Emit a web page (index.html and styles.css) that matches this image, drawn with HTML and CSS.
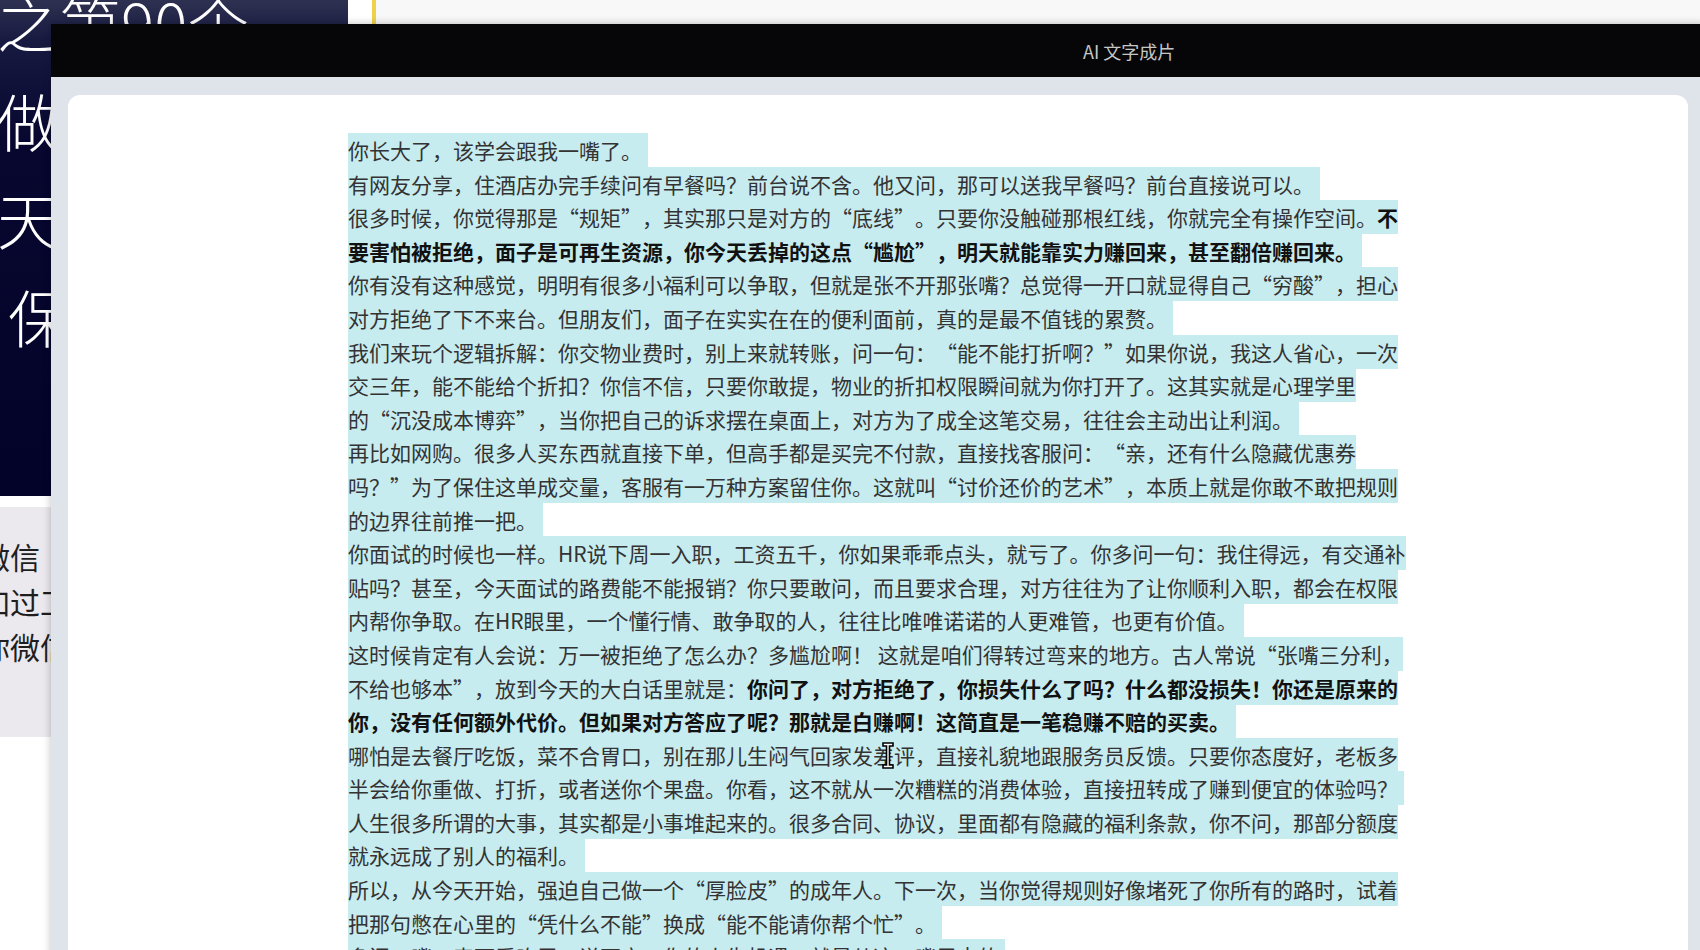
FILE: index.html
```html
<!DOCTYPE html>
<html lang="zh-CN">
<head>
<meta charset="utf-8">
<title>AI 文字成片</title>
<link rel="stylesheet" href="styles.css">
</head>
<body>
<div class="page">
  <aside class="left">
    <div class="poster">
      <div class="poster-text">
        <div>之第90个</div>
        <div>做</div>
        <div>天</div>
        <div class="ind">保</div>
      </div>
    </div>
    <div class="note">
      <div class="note-text">
        <p>微信</p>
        <p>加过工</p>
        <p>你微信</p>
      </div>
    </div>
  </aside>
  <div class="spacer"></div>
  <div class="rule"></div>
  <main class="workspace"></main>
</div>

<div class="modal">
  <header class="modal-head"><span class="modal-title">AI 文字成片</span></header>
  <div class="modal-body">
    <div class="card">
      <article class="doc">
        <p><span class="sel">你长大了，该学会跟我一嘴了。</span></p>
        <p><span class="sel">有网友分享，住酒店办完手续问有早餐吗？前台说不含。他又问，那可以送我早餐吗？前台直接说可以。</span></p>
        <p><span class="sel">很多时候，你觉得那是“规矩”，其实那只是对方的“底线”。只要你没触碰那根红线，你就完全有操作空间。<b>不要害怕被拒绝，面子是可再生资源，你今天丢掉的这点“尴尬”，明天就能靠实力赚回来，甚至翻倍赚回来。</b></span></p>
        <p><span class="sel">你有没有这种感觉，明明有很多小福利可以争取，但就是张不开那张嘴？总觉得一开口就显得自己“穷酸”，担心对方拒绝了下不来台。但朋友们，面子在实实在在的便利面前，真的是最不值钱的累赘。</span></p>
        <p><span class="sel">我们来玩个逻辑拆解：你交物业费时，别上来就转账，问一句：“能不能打折啊？”如果你说，我这人省心，一次交三年，能不能给个折扣？你信不信，只要你敢提，物业的折扣权限瞬间就为你打开了。这其实就是心理学里<span class="nb">的“</span>沉没成本博弈”，当你把自己的诉求摆在桌面上，对方为了成全这笔交易，往往会主动出让利润。</span></p>
        <p><span class="sel">再比如网购。很多人买东西就直接下单，但高手都是买完不付款，直接找客服问：“亲，还有什么隐藏优惠券吗？”为了保住这单成交量，客服有一万种方案留住你。这就叫“讨价还价的艺术”，本质上就是你敢不敢把规则的边界往前推一把。</span></p>
        <p><span class="sel">你面试的时候也一样。HR说下周一入职，工资五千，你如果乖乖点头，就亏了。你多问一句：我住得远，有交通补贴吗？甚至，今天面试的路费能不能报销？你只要敢问，而且要求合理，对方往往为了让你顺利入职，都会在权限内帮你争取。在HR眼里，一个懂行情、敢争取的人，往往比唯唯诺诺的人更难管，也更有价值。</span></p>
        <p><span class="sel">这时候肯定有人会说：万一被拒绝了怎么办？多尴尬啊！ 这就是咱们得转过弯来的地方。古人常说“张嘴三分利，不给也够本”，放到今天的大白话里就是：<b>你问了，对方拒绝了，你损失什么了吗？什么都没损失！你还是原来的你，没有任何额外代价。但如果对方答应了呢？那就是白赚啊！这简直是一笔稳赚不赔的买卖。</b></span></p>
        <p><span class="sel">哪怕是去餐厅吃饭，菜不合胃口，别在那儿生闷气回家发差评，直接礼貌地跟服务员反馈。只要你态度好，老板多半会给你重做、打折，或者送你个果盘。你看，这不就从一次糟糕的消费体验，直接扭转成了赚到便宜的体验吗？</span></p>
        <p><span class="sel">人生很多所谓的大事，其实都是小事堆起来的。很多合同、协议，里面都有隐藏的福利条款，你不问，那部分额度就永远成了别人的福利。</span></p>
        <p><span class="sel">所以，从今天开始，强迫自己做一个“厚脸皮”的成年人。下一次，当你觉得规则好像堵死了你所有的路时，试着把那句憋在心里的“凭什么不能”换成“能不能请你帮个忙”。</span></p>
        <p><span class="sel">多问一嘴，表面看吃亏，说不定，你的人生机遇，就是从这一嘴里来的</span></p>
      </article>
    </div>
  </div>
</div>

<svg class="cursor" width="12" height="27" viewBox="0 0 12 27" aria-hidden="true">
  <path d="M1 1H11V4H7.5V23H11V26H1V23H4.5V4H1Z" fill="#ffffff" stroke="#000000" stroke-width="1.6" stroke-linejoin="miter"/>
</svg>
</body>
</html>
```

FILE: styles.css
```css
html, body {
  margin: 0;
  padding: 0;
  width: 1700px;
  height: 950px;
  overflow: hidden;
  background: #ffffff;
  font-family: "Noto Sans CJK SC", "Noto Sans", sans-serif;
}

.page {
  display: flex;
  height: 950px;
}

.left {
  width: 348px;
  display: flex;
  flex-direction: column;
  flex-shrink: 0;
}

.poster {
  height: 496px;
  overflow: hidden;
  color: #ffffff;
  background: linear-gradient(180deg, #2e3150 0, #181a42 40px, #07072f 140px, #03032a 100%);
}

.poster-text {
  margin-top: -27px;
  margin-left: -3px;
  font-size: 62px;
  line-height: 98px;
  font-weight: 300;
  white-space: nowrap;
}

.poster-text .ind {
  padding-left: 11px;
}

.note {
  margin-top: 11px;
  height: 230px;
  background: #ebe8ee;
  overflow: hidden;
}

.note-text {
  margin-left: -20px;
  padding-top: 27px;
  font-size: 30px;
  line-height: 45px;
  color: #1e1e1e;
  white-space: nowrap;
}

.note-text p {
  margin: 0;
}

.spacer {
  width: 24px;
  flex-shrink: 0;
}

.rule {
  width: 4px;
  flex-shrink: 0;
  background: #efd24a;
}

.workspace {
  flex: 1;
  background: #f8f8f8;
}

.modal {
  position: absolute;
  left: 51px;
  top: 24px;
  width: 1654px;
  height: 940px;
  display: flex;
  flex-direction: column;
  box-shadow: 0 0 8px rgba(0, 0, 0, 0.25);
}

.modal-head {
  height: 53px;
  flex-shrink: 0;
  background: #060608;
  display: flex;
  align-items: center;
  padding-left: 1032px;
}

.modal-title {
  color: #c6c6c6;
  font-size: 18px;
}

.modal-body {
  flex: 1;
  background: #dfe4ea;
  padding: 18px 17px 0;
}

.card {
  height: 100%;
  background: #ffffff;
  border-radius: 12px 12px 0 0;
  padding-top: 39px;
  box-sizing: border-box;
}

.doc {
  width: 1060px;
  margin: 0 auto;
  font-size: 21px;
  line-height: 33.6px;
  color: #333333;
  text-spacing-trim: space-all;
}

.doc p {
  margin: 0;
}

.doc b {
  font-weight: 700;
  color: #111111;
}

.sel {
  background: #c7ecf0;
  padding: 2px 6px 2px 0;
}

.nb {
  white-space: nowrap;
}

.cursor {
  position: absolute;
  left: 882px;
  top: 742px;
}
```
